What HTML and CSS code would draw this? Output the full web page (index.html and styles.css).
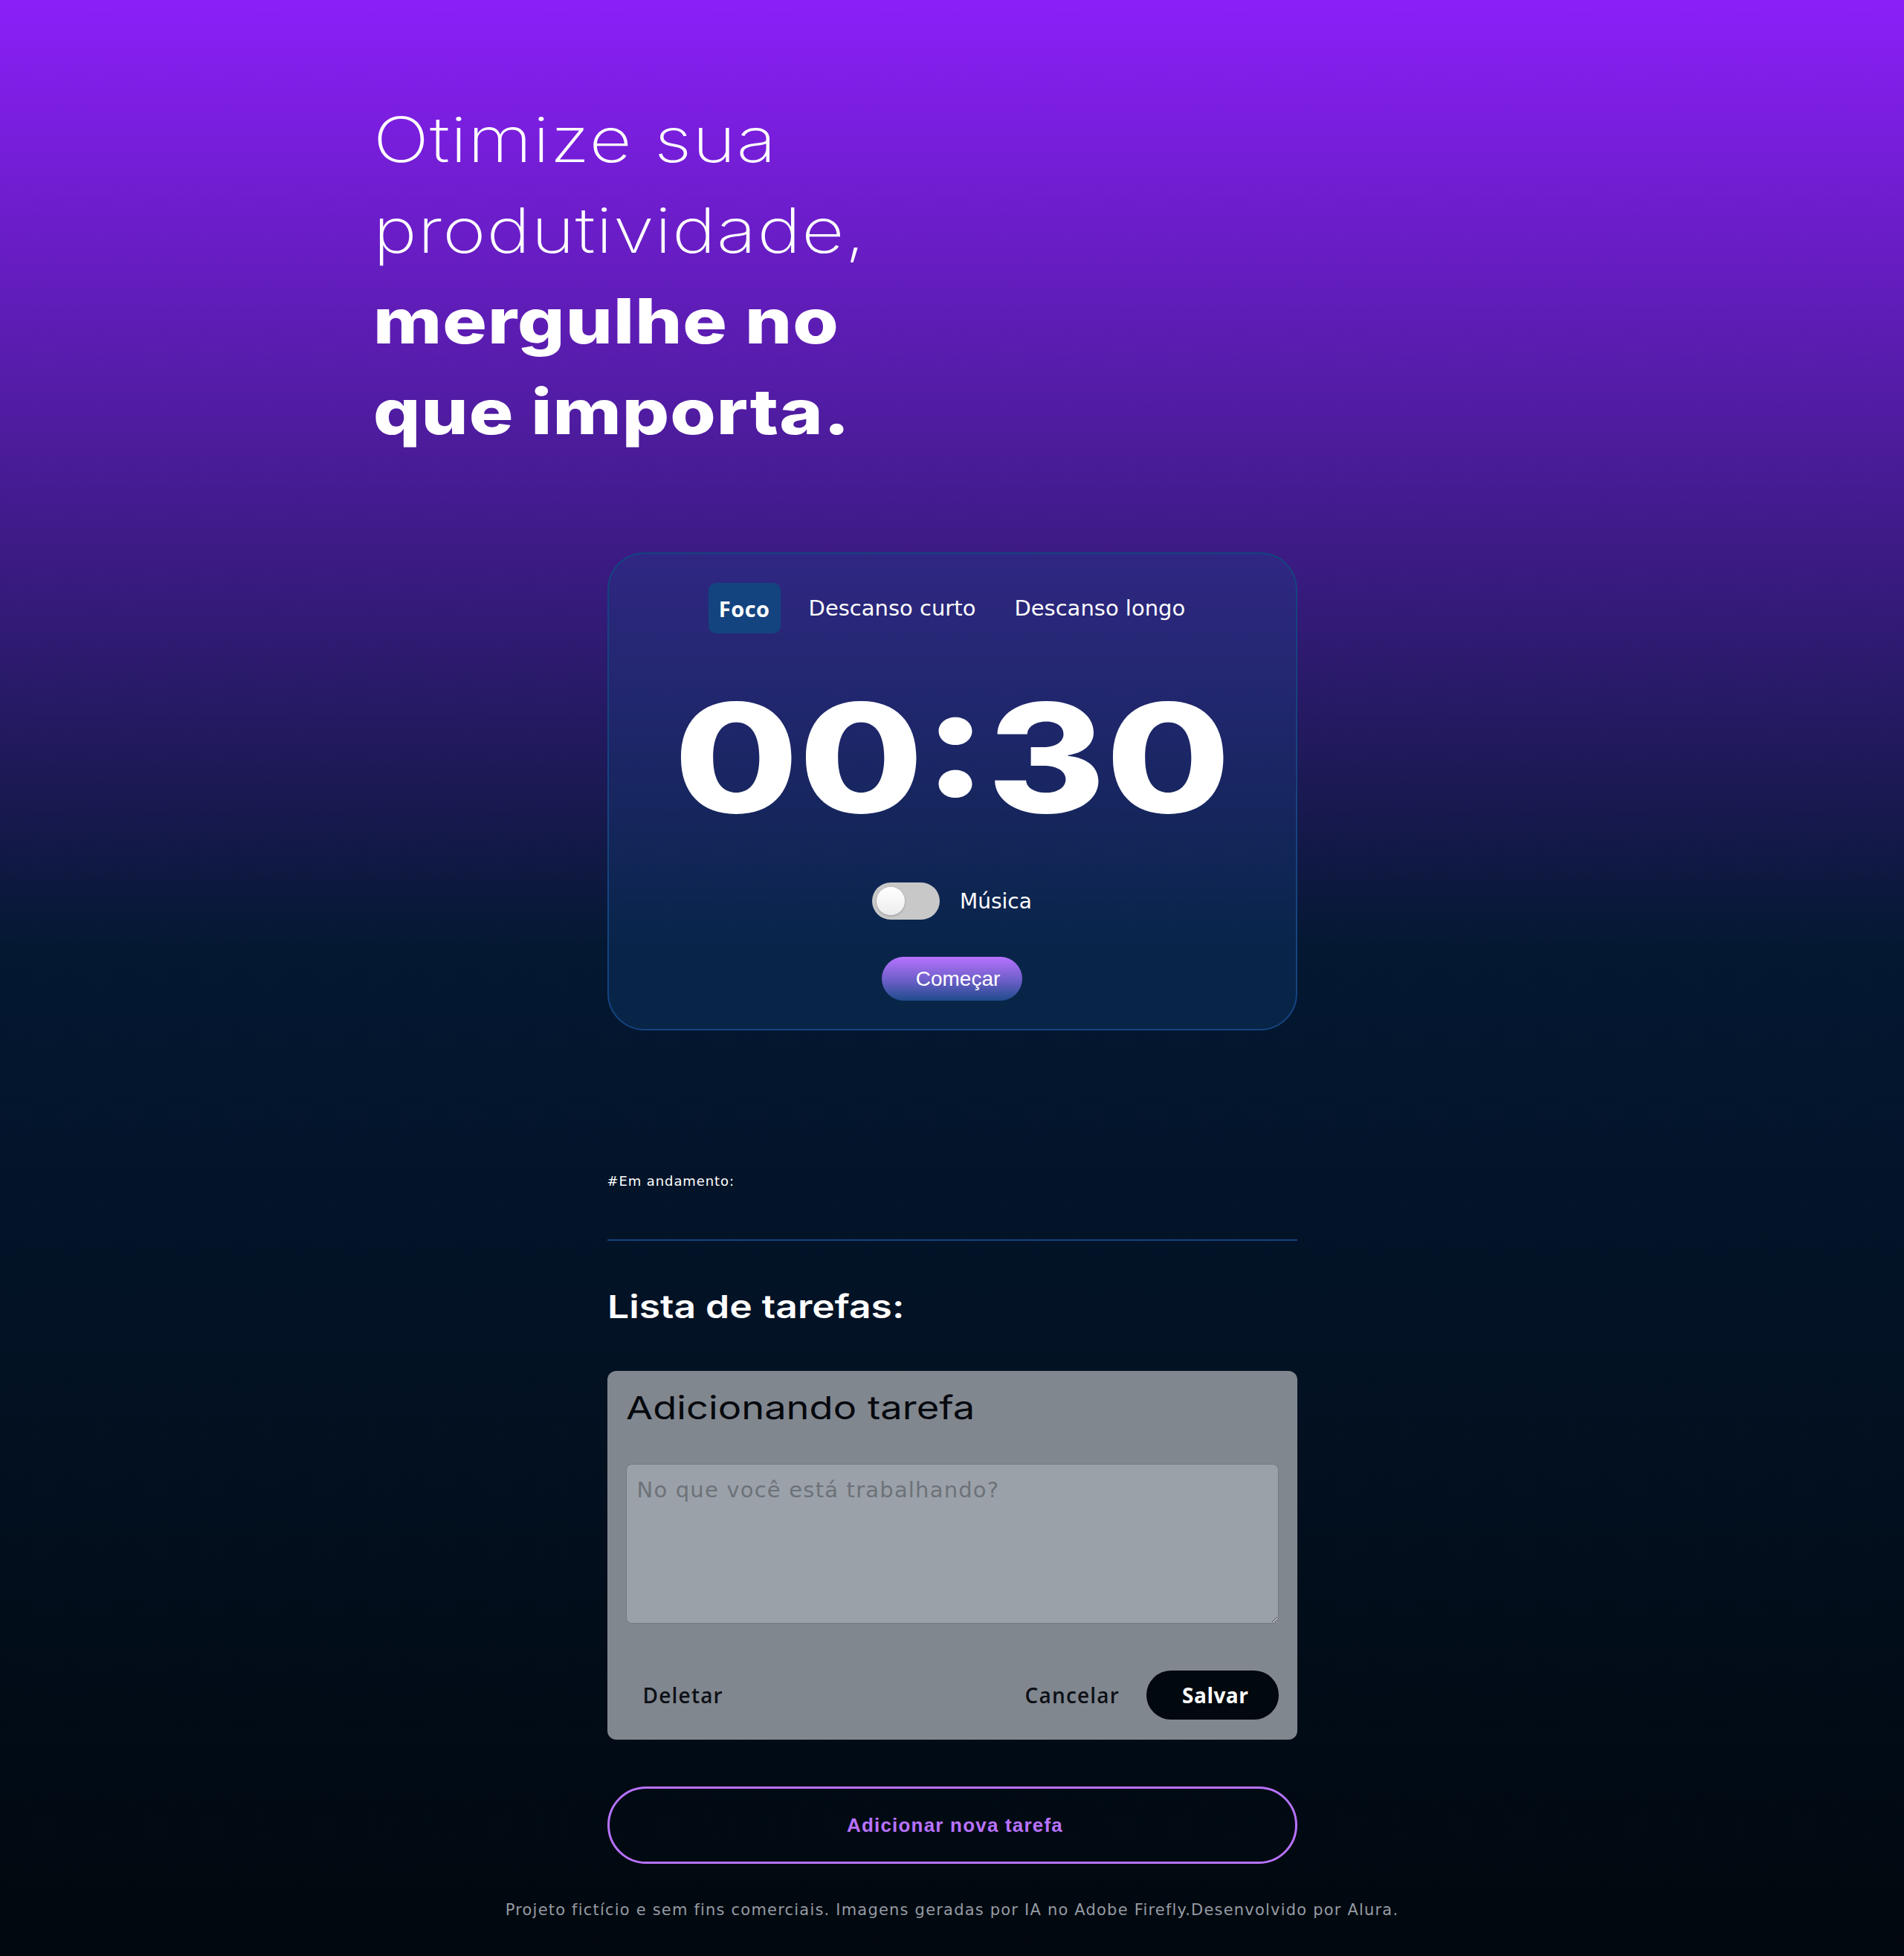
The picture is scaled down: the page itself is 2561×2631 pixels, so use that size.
FILE: index.html
```html
<!DOCTYPE html>
<html lang="pt-BR">
<head>
<meta charset="utf-8">
<title>Fokus</title>
<link rel="stylesheet" href="styles.css">
</head>
<body>
<main class="page">
  <section class="hero">
    <h1 class="hero__title">
      <span class="hero__line">Otimize sua</span>
      <span class="hero__line">produtividade,</span>
      <strong class="hero__line hero__line--strong">mergulhe no</strong>
      <strong class="hero__line hero__line--strong">que importa.</strong>
    </h1>
  </section>

  <section class="timer-card">
    <nav class="tabs">
      <button class="tab tab--active" type="button">Foco</button>
      <button class="tab" type="button">Descanso curto</button>
      <button class="tab" type="button">Descanso longo</button>
    </nav>
    <div class="timer"><span class="timer__digits">00:30</span></div>
    <div class="music">
      <span class="switch"><span class="switch__knob"></span></span>
      <span class="music__label">Música</span>
    </div>
    <button class="start-btn" type="button">Começar</button>
  </section>

  <section class="tasks">
    <p class="tasks__active">#Em andamento:</p>
    <h2 class="tasks__title"><span class="wide wide--list">Lista de tarefas:</span></h2>
    <form class="task-form">
      <h3 class="task-form__title"><span class="wide wide--form">Adicionando tarefa</span></h3>
      <textarea class="task-form__input" placeholder="No que você está trabalhando?"></textarea>
      <div class="task-form__actions">
        <button type="button" class="text-btn">Deletar</button>
        <div class="task-form__right">
          <button type="button" class="text-btn">Cancelar</button>
          <button type="button" class="save-btn">Salvar</button>
        </div>
      </div>
    </form>
    <button class="add-btn" type="button">Adicionar nova tarefa</button>
  </section>

  <footer class="footer">Projeto fictício e sem fins comerciais. Imagens geradas por IA no Adobe Firefly.Desenvolvido por Alura.</footer>
</main>
</body>
</html>
```

FILE: styles.css
```css
* {
  box-sizing: border-box;
}

html {
  min-height: 100%;
  background: linear-gradient(180deg, #8B1FF8 0%, #041832 48.44%, #01080E 100%);
}

body {
  margin: 0;
  font-family: "DejaVu Sans", sans-serif;
  color: #fff;
}

.page {
  display: flex;
  flex-direction: column;
  align-items: center;
}

/* Hero */
.hero {
  width: 1557px;
  padding-top: 127px;
}

.hero__title {
  margin: 0;
  font-family: Inter, sans-serif;
  font-size: 84px;
  line-height: 122px;
  font-weight: 200;
  letter-spacing: 0.01em;
  transform: scaleX(1.185);
  transform-origin: left center;
}

.hero__line {
  display: block;
}

.hero__line--strong {
  font-weight: 800;
}

/* Wide headings (stand-in for a wide display face) */
.wide {
  display: inline-block;
  transform-origin: left center;
}

.wide--list {
  transform: scaleX(1.2);
}

.wide--form {
  transform: scaleX(1.22);
}

/* Timer card */
.timer-card {
  width: 928px;
  margin-top: 128px;
  border: 2px solid #144480;
  border-radius: 50px;
  background: rgba(20, 68, 128, 0.3);
  padding: 39px 0 38px;
  display: flex;
  flex-direction: column;
  align-items: center;
}

.tabs {
  display: flex;
  gap: 24px;
}

.tab {
  height: 68px;
  padding: 0 14px;
  border: 0;
  border-radius: 10px;
  background: transparent;
  color: #fff;
  font-family: "DejaVu Sans", sans-serif;
  font-size: 29px;
  font-weight: 400;
}

.tab--active {
  background: #144480;
  font-family: "Open Sans", sans-serif;
  font-weight: 700;
  letter-spacing: 0.5px;
}

.timer {
  margin-top: 65px;
  font-family: Inter, sans-serif;
  font-weight: 800;
  font-size: 204px;
  line-height: 204px;
  height: 204px;
}

.timer__digits {
  display: inline-block;
  transform: scaleX(1.19);
}

.music {
  margin-top: 66px;
  display: flex;
  align-items: center;
  gap: 27px;
}

.switch {
  position: relative;
  width: 91px;
  height: 50px;
  border-radius: 25px;
  background: #c8c8c8;
}

.switch__knob {
  position: absolute;
  left: 6px;
  top: 6px;
  width: 38px;
  height: 38px;
  border-radius: 50%;
  background: linear-gradient(180deg, #ffffff 0%, #ececec 100%);
  box-shadow: 0 1px 3px rgba(0, 0, 0, 0.25);
}

.music__label {
  font-size: 28px;
  color: #fff;
}

.start-btn {
  margin-top: 50px;
  height: 59px;
  padding: 0 30px 0 46px;
  border: 0;
  border-radius: 30px;
  background: linear-gradient(180deg, #B872FF 0%, #6a5ec6 55%, #1f4c8c 100%);
  color: #fff;
  font-family: "Liberation Sans", Arial, sans-serif;
  font-size: 28px;
}

/* Tasks */
.tasks {
  width: 928px;
  display: flex;
  flex-direction: column;
}

.tasks__active {
  margin: 191px 0 0;
  font-size: 18px;
  line-height: 24px;
  letter-spacing: 0.9px;
  padding-bottom: 66px;
  border-bottom: 2px solid #144480;
}

.tasks__title {
  margin: 62px 0 0;
  font-family: Inter, sans-serif;
  font-weight: 600;
  font-size: 43px;
  line-height: 52px;
}

.task-form {
  margin-top: 61px;
  background: #81878f;
  border-radius: 12px;
  padding: 23px 25px 27px;
  display: flex;
  flex-direction: column;
}

.task-form__title {
  margin: 0;
  font-family: Inter, sans-serif;
  font-weight: 400;
  font-size: 43px;
  line-height: 52px;
  color: #05080d;
}

.task-form__input {
  margin-top: 50px;
  width: 100%;
  height: 215px;
  background: #9aa1a9;
  border: 1px solid #737a82;
  border-radius: 8px;
  padding: 17px 14px 12px;
  font-family: "DejaVu Sans", sans-serif;
  font-size: 29px;
  letter-spacing: 1.2px;
  color: #222;
  resize: vertical;
}

.task-form__input::placeholder {
  color: #6d7278;
}

.task-form__actions {
  margin-top: 63px;
  height: 66px;
  display: flex;
  align-items: center;
  justify-content: space-between;
}

.task-form__right {
  display: flex;
  align-items: center;
  gap: 13px;
}

.text-btn {
  height: 66px;
  padding: 0 23px;
  border: 0;
  background: transparent;
  font-family: "Open Sans", sans-serif;
  font-size: 28px;
  font-weight: 600;
  letter-spacing: 1.2px;
  color: #0d1016;
}

.save-btn {
  height: 66px;
  padding: 0 40px 0 48px;
  border: 0;
  border-radius: 33px;
  background: #01080E;
  color: #fff;
  font-family: "Open Sans", sans-serif;
  font-size: 28px;
  font-weight: 700;
  letter-spacing: 0.5px;
}

.add-btn {
  margin-top: 63px;
  width: 100%;
  height: 104px;
  padding-left: 14px;
  border: 3px solid #B872FF;
  border-radius: 52px;
  background: transparent;
  color: #B872FF;
  font-family: "Liberation Sans", Arial, sans-serif;
  font-size: 26px;
  font-weight: 700;
  letter-spacing: 1.2px;
}

/* Footer */
.footer {
  margin-top: 48px;
  padding-bottom: 48px;
  font-size: 21px;
  line-height: 28px;
  letter-spacing: 1.2px;
  color: #959aa3;
  text-align: center;
}
```
